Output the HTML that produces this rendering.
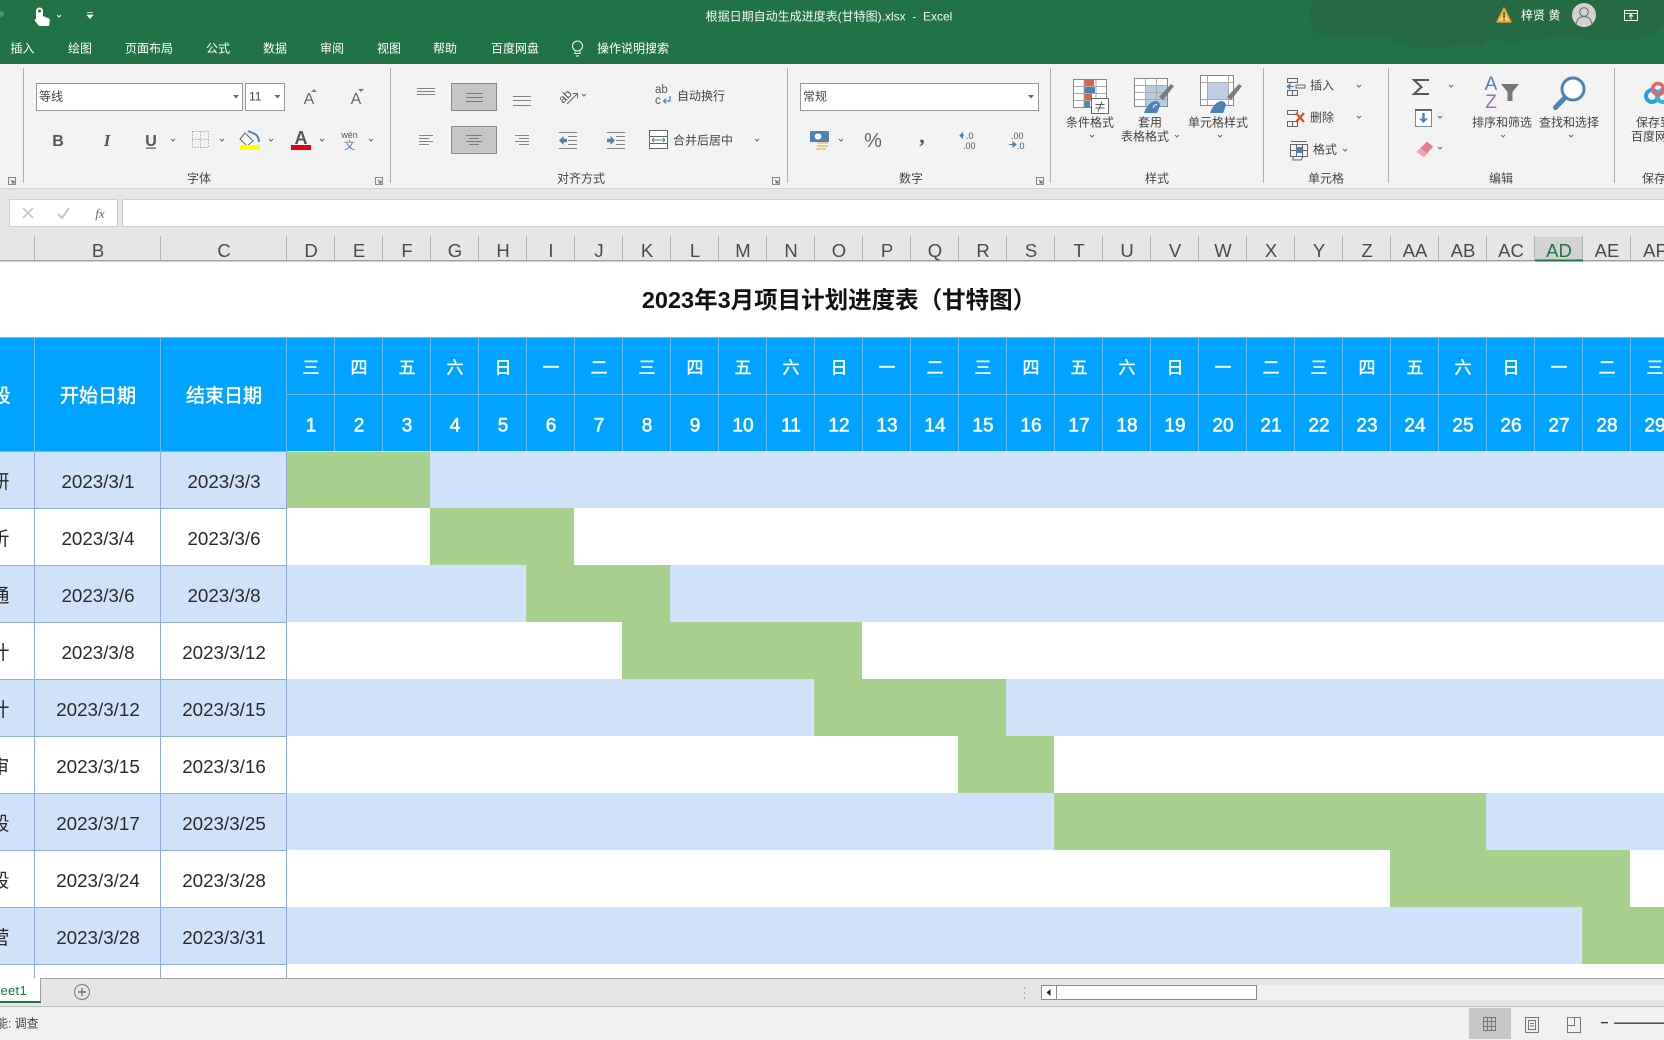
<!DOCTYPE html>
<html lang="zh">
<head>
<meta charset="utf-8">
<title>根据日期自动生成进度表(甘特图).xlsx - Excel</title>
<style>
html,body{margin:0;padding:0;width:1664px;height:1040px;overflow:hidden;background:#fff}
svg{display:block;position:absolute;left:0;top:0}
text{font-family:"Liberation Sans","Noto Sans CJK SC",sans-serif}
.u{font-size:12px;fill:#444}
.w{font-size:12px;fill:#fff}
.m{text-anchor:middle}
.h{font-size:18.5px;fill:#4a4a4a;text-anchor:middle}
.d{font-size:18.8px;fill:#2a2a2a;text-anchor:middle}
.n{font-size:19px;fill:#fff;stroke:#fff;stroke-width:.6px;text-anchor:middle}
.s{font-size:17px;fill:#fff;stroke:#fff;stroke-width:.4px;text-anchor:middle}
.g{font-size:19px;fill:#fff;stroke:#fff;stroke-width:.5px;text-anchor:middle}
.l{stroke:#666;stroke-width:1;fill:none}
</style>
</head>
<body>
<svg width="1664" height="1040" viewBox="0 0 1664 1040" xmlns="http://www.w3.org/2000/svg">
<!-- Title bar -->
<rect x="0" y="0" width="1664" height="64" fill="#217346"/>
<path d="M1312 0C1308 14 1310 30 1320 37L1392 37C1396 44 1404 48 1420 47L1484 46L1490 38L1510 43C1540 36 1590 38 1612 40C1640 42 1656 36 1664 26L1664 0Z" fill="#2a5f42" opacity=".36"/>
<circle cx="1" cy="14" r="3" fill="#4f9170"/>
<path d="M36 19V11a3.500 3.500 0 1 1 7 0V16l5 2c1.500 .6 2 1.600 1.800 3L49 26H39l-4-5c-.8-1 .2-2.500 1-2Z" fill="#fff"/>
<circle cx="39.500" cy="11" r="1.500" fill="#217346"/>
<path d="M57 15l2 2 2-2" fill="none" stroke="#fff"/>
<path d="M87 12.500h6M87 15h6l-3 3.500Z" fill="#fff" stroke="#fff" stroke-width=".7"/>
<text class="w m" x="829" y="20.500" fill-opacity=".95">根据日期自动生成进度表(甘特图).xlsx&#160;&#160;-&#160;&#160;Excel</text>
<polygon points="1504,8 1511,22 1497,22" fill="#f9cc6a" stroke="#e89a32" stroke-width="1.500" stroke-linejoin="round"/>
<rect x="1503.300" y="12" width="1.500" height="6" fill="#5a4a20"/><rect x="1503.300" y="19" width="1.500" height="1.500" fill="#5a4a20"/>
<text class="w" x="1521" y="19.500">梓贤 黄</text>
<circle cx="1584" cy="15" r="12" fill="#d2d2d2"/>
<circle cx="1584" cy="12" r="4.300" fill="none" stroke="#666"/>
<path d="M1576 24c1-5 4-7.500 8-7.500s7 2.500 8 7.500" fill="none" stroke="#666"/>
<rect x="1624.500" y="10.500" width="13" height="10" fill="none" stroke="#fff"/>
<path d="M1625 13.500h12M1631 19.500v-5M1629 16.500l2-2 2 2" fill="none" stroke="#fff"/>
<!-- Menu tabs -->
<text class="w" x="10.500" y="52.500">插入</text>
<text class="w" x="68" y="52.500">绘图</text>
<text class="w" x="125" y="52.500">页面布局</text>
<text class="w" x="206" y="52.500">公式</text>
<text class="w" x="263" y="52.500">数据</text>
<text class="w" x="320" y="52.500">审阅</text>
<text class="w" x="377" y="52.500">视图</text>
<text class="w" x="433" y="52.500">帮助</text>
<text class="w" x="491" y="52.500">百度网盘</text>
<text class="w" x="597" y="52.500">操作说明搜索</text>
<circle cx="577.500" cy="46" r="5" fill="none" stroke="#fff"/>
<path d="M575 51.500v2h5v-2M576 56h3" fill="none" stroke="#fff"/>
<!-- Ribbon -->
<rect x="0" y="64" width="1664" height="124" fill="#f3f3f3"/>
<rect x="0" y="188" width="1664" height="39" fill="#e6e6e6"/>
<rect x="0" y="188" width="1664" height="1" fill="#d4d4d4"/>
<path d="M23.500 68V183M390.500 68V183M787.500 68V183M1050.500 68V183M1263.500 68V183M1388.500 68V183M1614.500 68V183" stroke="#b0b0b0" fill="none"/>
<!-- launchers -->
<path d="M8.500 177.500h7v7h-7zM375.500 177.500h7v7h-7zM772.500 177.500h7v7h-7zM1036.500 177.500h7v7h-7z" fill="none" stroke="#888"/>
<path d="M11 180l3 3M14 180.500V183h-2.500M378 180l3 3M381 180.500V183h-2.500M775 180l3 3M778 180.500V183h-2.500M1039 180l3 3M1042 180.500V183h-2.500" fill="none" stroke="#666"/>
<!-- group labels -->
<text class="u m" x="199" y="182.500">字体</text>
<text class="u m" x="581" y="182.500">对齐方式</text>
<text class="u m" x="911" y="182.500">数字</text>
<text class="u m" x="1157" y="182.500">样式</text>
<text class="u m" x="1326" y="182.500">单元格</text>
<text class="u m" x="1501" y="182.500">编辑</text>
<text class="u" x="1642" y="182.500">保存</text>
<!-- combo boxes -->
<rect x="36.500" y="83.500" width="206" height="27" fill="#fff" stroke="#999"/>
<rect x="245.500" y="83.500" width="39" height="27" fill="#fff" stroke="#999"/>
<rect x="800.500" y="83.500" width="238" height="27" fill="#fff" stroke="#999"/>
<text class="u" x="39" y="100.500">等线</text>
<text class="u" x="249" y="100.500">11</text>
<text class="u" x="803" y="100.500">常规</text>
<path d="M233 95h6l-3 3.500ZM274.500 95h6l-3 3.500ZM1028 95h6l-3 3.500Z" fill="#666"/>
<!-- grow/shrink -->
<text x="309" y="104" class="m" font-size="16" fill="#666">A</text>
<text x="356" y="104" class="m" font-size="16" fill="#666">A</text>
<path d="M311 92l3-3 3 3Z" fill="#4e81b5"/>
<path d="M358 89h6l-3 3Z" fill="#4e81b5"/>
<!-- B I U -->
<text x="58" y="146" class="m" font-size="16" font-weight="700" fill="#555">B</text>
<text x="107" y="146" class="m" font-size="17" font-weight="700" font-style="italic" fill="#555" style="font-family:'Liberation Serif',serif">I</text>
<text x="151" y="146" class="m" font-size="16" font-weight="700" fill="#555">U</text>
<rect x="146" y="147.500" width="10" height="1.200" fill="#555"/>
<!-- border icon -->
<path d="M192.500 131.500h16v16h-16zM200.500 131.500v16M192.500 139.500h16" fill="none" stroke="#888" stroke-dasharray="1 2"/>
<!-- fill color -->
<path d="M245 133l8 8-6 5-7-7Z" fill="#fff" stroke="#666"/>
<path d="M248 131l7 3c2 1 4 4 4 8" fill="none" stroke="#4e81b5" stroke-width="2"/>
<rect x="240" y="145" width="20" height="5" fill="#ffff00"/>
<!-- font color -->
<text x="301" y="144" class="m" font-size="18" font-weight="700" fill="#555">A</text>
<rect x="291" y="145" width="20" height="5" fill="#e60012"/>
<!-- wen -->
<text x="349.500" y="138" class="m" font-size="9" fill="#555">wén</text>
<text x="349.500" y="149" class="m" font-size="11" fill="#4e81b5">文</text>
<!-- align icons -->
<rect x="451.500" y="83.500" width="45" height="27" fill="#c6c6c6" stroke="#8a8a8a"/>
<rect x="451.500" y="126.500" width="45" height="27" fill="#c6c6c6" stroke="#8a8a8a"/>
<path class="l" stroke-opacity=".8" d="M417 88.500h18M417 91.500h18M417 94.500h18M466 93.500h17M466 97.500h17M466 101.500h17M513 96.500h18M513 100.500h18M513 105.500h18M419 135.500h14M419 138.500h10M419 141.500h14M419 144.500h10M466 135.500h16M469 138.500h10M466 141.500h16M469 144.500h10M515 135.500h14M519 138.500h10M515 141.500h14M519 144.500h10"/>
<!-- orientation -->
<text x="0" y="0" font-size="12" fill="#555" transform="translate(563 104) rotate(-45)">ab</text>
<path d="M567 104l10-10M572.500 93.500h5v5" fill="none" stroke="#666"/>
<!-- wrap -->
<text x="655" y="93" font-size="11.500" fill="#555">ab</text>
<text x="655" y="104" font-size="11.500" fill="#555">c</text>
<path d="M670 96v5h-6M666 98.500l-2.500 2.500 2.500 2.500" fill="none" stroke="#4e81b5" stroke-width="1.200"/>
<text class="u" x="677" y="100">自动换行</text>
<!-- indent -->
<path class="l" stroke-opacity=".8" d="M559 132.500h18M568 136.500h9M568 140.500h9M568 144.500h9M559 148.500h18M607 132.500h18M616 136.500h9M616 140.500h9M616 144.500h9M607 148.500h18"/>
<path d="M559 140.500l4.500-4.500v2.800h3.500v3.400h-3.500v2.800ZM615 140.500l-4.500-4.500v2.800h-3.500v3.400h3.500v2.800Z" fill="#4e81b5"/>
<!-- merge -->
<rect x="649.500" y="130.500" width="18" height="18" fill="#fff" stroke="#666"/>
<path d="M650 136.500h17M650 143.500h17" stroke="#666"/>
<path d="M652 140h13M654 138l-2 2 2 2M663 138l2 2-2 2" fill="none" stroke="#4e81b5"/>
<text class="u" x="673" y="144.500">合并后居中</text>
<!-- number icons -->
<rect x="810" y="131" width="19" height="11" rx="1" fill="#4e81b5"/>
<ellipse cx="818" cy="136.500" rx="3.500" ry="3" fill="#fff"/>
<path d="M817 142h11v2h-11zM817 145h11v2h-11zM816 148h10v2h-10z" fill="#f2c98d"/>
<text x="873" y="147" class="m" font-size="20" fill="#666">%</text>
<text x="922" y="143" class="m" font-size="22" font-weight="700" fill="#555" style="font-family:'Liberation Serif',serif">,</text>
<path d="M960 135.500h4M960 135.500l2.500-2.500v5ZM1009 144.500h4M1016 144.500l-3-2.500v5Z" fill="#4e81b5" stroke="#4e81b5"/>
<text x="966" y="139" font-size="9" fill="#555">.0</text>
<text x="963" y="149" font-size="9" fill="#555">.00</text>
<text x="1011" y="139" font-size="9" fill="#555">.00</text>
<text x="1017" y="149" font-size="9" fill="#555">.0</text>
<!-- Conditional format -->
<rect x="1073.500" y="79.500" width="33" height="28" fill="#fff" stroke="#888"/>
<path d="M1084 79.500h10v7h-10z" fill="#d9644a"/>
<path d="M1084 86.500h11v7h-11z" fill="#4e81b5"/>
<path d="M1084 93.500h8v7h-8z" fill="#d9644a"/>
<path d="M1084 100.500h6v7h-6z" fill="#4e81b5"/>
<path d="M1084 80v27M1096 80v27M1074 86.500h32M1074 93.500h32M1074 100.500h32" stroke="#aaa" fill="none"/>
<rect x="1091.500" y="98.500" width="17" height="15" fill="#fff" stroke="#666"/>
<path d="M1095.500 104.500h9M1095.500 108h9M1102 101.500l-4 10" stroke="#555" fill="none"/>
<text class="u m" x="1090" y="126.500">条件格式</text>
<!-- Table format -->
<rect x="1134.500" y="78.500" width="33" height="28" fill="#fff" stroke="#888"/>
<rect x="1146" y="85" width="21" height="21" fill="#b9cbe4"/>
<path d="M1145.500 79v27M1156.500 79v27M1135 85.500h32M1135 92.500h32M1135 99.500h32" stroke="#aaa" fill="none"/>
<path d="M1171 84l3 2-11 14-4-3Z" fill="#7a7a7a"/>
<path d="M1144 113c2-6 6-11 11-12 3 0 5 2 5 4-1 3-2 6-3 8Z" fill="#4e81b5"/>
<path d="M1153 108c1-3 3-4 4-3" stroke="#fff" fill="none"/>
<text class="u m" x="1150" y="126.500">套用</text>
<text class="u" x="1121" y="140.500">表格格式</text>
<!-- Cell style -->
<rect x="1200.500" y="75.500" width="33" height="30" fill="#fff" stroke="#888"/>
<rect x="1207" y="82" width="21" height="18" fill="#bccde5"/>
<path d="M1207.500 76v29M1228.500 76v29M1201 82.500h32M1201 99.500h32" stroke="#aaa" fill="none"/>
<path d="M1239 84l3 2-11 14-4-3Z" fill="#7a7a7a"/>
<path d="M1210 113c2-6 6-11 11-12 3 0 5 2 5 4-1 3-2 6-3 8Z" fill="#4e81b5"/>
<text class="u m" x="1218" y="126.500">单元格样式</text>
<!-- Insert -->
<path class="l" d="M1287.500 78.500h10v4h-10zM1287.500 90.500h10v5h-10zM1292.500 90.500v5M1296 85h9v3h-9z"/>
<path d="M1287 86.500h7M1287 86.500l3-2.500v5Z" fill="#4e81b5" stroke="#4e81b5"/>
<text class="u" x="1310" y="89.500">插入</text>
<!-- Delete -->
<path class="l" d="M1287.500 110.500h10v4h-10zM1287.500 121.500h10v5h-10zM1292.500 121.500v5"/>
<path d="M1296 113l8 9M1304 113l-8 9" stroke="#d9502e" stroke-width="2.200" fill="none"/>
<text class="u" x="1310" y="121.500">删除</text>
<!-- Format -->
<path class="l" d="M1290.500 144.500h17v12h-17zM1296.500 144.500v12M1302.500 144.500v12M1290.500 150.500h17M1291 141.500h16M1293 156.500v3.500h8l2-3.500"/>
<rect x="1296" y="147" width="6" height="6" fill="#4e81b5"/>
<text class="u" x="1313" y="153.500">格式</text>
<!-- Sigma -->
<path d="M1429 80H1414L1421.500 87L1414 94H1429" fill="none" stroke="#555" stroke-width="2"/>
<!-- Fill down -->
<rect x="1415.500" y="109.500" width="16" height="17" fill="#fff" stroke="#888"/>
<rect x="1415" y="109" width="17" height="2" fill="#666"/>
<path d="M1423.500 113v7" stroke="#4e81b5" stroke-width="2.400"/>
<path d="M1419 118.500h9l-4.500 4.500Z" fill="#4e81b5"/>
<!-- Eraser -->
<path d="M1427 141.500l6 5-9 10.500-7.500-5Z" fill="#e8798f"/>
<path d="M1416.500 152l4-4 6 5-3 4Z" fill="#f1a6b5"/>
<!-- Sort -->
<text x="1491" y="90" class="m" font-size="19" fill="#4e81b5">A</text>
<text x="1491" y="108" class="m" font-size="19" fill="#9a72b8">Z</text>
<polygon points="1501,84 1519,84 1512.500,92 1512.500,101 1507.500,101 1507.500,92" fill="#777"/>
<text class="u m" x="1502" y="126.500">排序和筛选</text>
<!-- Find -->
<circle cx="1573" cy="89" r="11" fill="#fff" stroke="#4e81b5" stroke-width="3"/>
<path d="M1564.500 98l-9 9.500" stroke="#4e81b5" stroke-width="5" stroke-linecap="round"/>
<text class="u m" x="1569" y="126.500">查找和选择</text>
<!-- Baidu -->
<circle cx="1652" cy="96" r="6" fill="none" stroke="#2f9be0" stroke-width="4"/>
<circle cx="1663" cy="96" r="6" fill="none" stroke="#2fb5e0" stroke-width="4"/>
<circle cx="1658" cy="89" r="5.500" fill="none" stroke="#e8616b" stroke-width="3.500"/>
<text class="u" x="1636" y="126.500">保存到</text>
<text class="u" x="1631" y="140.500">百度网盘</text>
<!-- Chevrons -->
<path fill="none" stroke="#666" d="M171 139l2 2 2-2M220 139l2 2 2-2M269 139l2 2 2-2M320 139l2 2 2-2M369 139l2 2 2-2M582 94l2 2 2-2M755 139l2 2 2-2M839 139l2 2 2-2M1090 135l2 2 2-2M1175 135l2 2 2-2M1218 135l2 2 2-2M1357 85l2 2 2-2M1357 116l2 2 2-2M1343 149l2 2 2-2M1449 85l2 2 2-2M1438 116l2 2 2-2M1438 147l2 2 2-2M1501 135l2 2 2-2M1569 135l2 2 2-2"/>
<!-- Formula bar -->
<rect x="9.500" y="199.500" width="108" height="27" fill="#fff" stroke="#d0d0d0"/>
<rect x="122.500" y="199.500" width="1543" height="27" fill="#fff" stroke="#d0d0d0"/>
<path d="M23 208l10 10M33 208l-10 10" stroke="#c8c8c8" stroke-width="1.800" fill="none"/>
<path d="M58 214l4 4 7-10" stroke="#c8c8c8" stroke-width="2.200" fill="none"/>
<text x="100" y="218" class="m" font-size="13" font-style="italic" fill="#666" style="font-family:'Liberation Serif',serif">fx</text>
<!-- Column headers -->
<rect x="0" y="227" width="1664" height="34" fill="#e6e6e6"/>
<rect x="1535" y="237" width="48" height="24" fill="#d2d2d2"/>
<path stroke="#b4b4b4" fill="none" d="M34.500 236V260M160.500 236V260M286.500 236V260M334.500 236V260M382.500 236V260M430.500 236V260M478.500 236V260M526.500 236V260M574.500 236V260M622.500 236V260M670.500 236V260M718.500 236V260M766.500 236V260M814.500 236V260M862.500 236V260M910.500 236V260M958.500 236V260M1006.500 236V260M1054.500 236V260M1102.500 236V260M1150.500 236V260M1198.500 236V260M1246.500 236V260M1294.500 236V260M1342.500 236V260M1390.500 236V260M1438.500 236V260M1486.500 236V260M1534.500 236V260M1582.500 236V260M1630.500 236V260"/>
<rect x="0" y="260" width="1664" height="1.500" fill="#a0a0a0"/>
<rect x="1535" y="259.500" width="48" height="2" fill="#217346"/>
<g>
<text class="h" x="98" y="257">B</text><text class="h" x="224" y="257">C</text>
<text class="h" x="311" y="257">D</text><text class="h" x="359" y="257">E</text><text class="h" x="407" y="257">F</text><text class="h" x="455" y="257">G</text><text class="h" x="503" y="257">H</text><text class="h" x="551" y="257">I</text><text class="h" x="599" y="257">J</text><text class="h" x="647" y="257">K</text><text class="h" x="695" y="257">L</text><text class="h" x="743" y="257">M</text><text class="h" x="791" y="257">N</text><text class="h" x="839" y="257">O</text><text class="h" x="887" y="257">P</text><text class="h" x="935" y="257">Q</text><text class="h" x="983" y="257">R</text><text class="h" x="1031" y="257">S</text><text class="h" x="1079" y="257">T</text><text class="h" x="1127" y="257">U</text><text class="h" x="1175" y="257">V</text><text class="h" x="1223" y="257">W</text><text class="h" x="1271" y="257">X</text><text class="h" x="1319" y="257">Y</text><text class="h" x="1367" y="257">Z</text><text class="h" x="1415" y="257">AA</text><text class="h" x="1463" y="257">AB</text><text class="h" x="1511" y="257">AC</text><text class="h" x="1559" y="257" style="fill:#217346">AD</text><text class="h" x="1607" y="257">AE</text><text class="h" x="1655" y="257">AF</text>
</g>
<!-- Sheet -->
<rect x="0" y="262" width="1664" height="716" fill="#fff"/>
<text x="839" y="308" class="m" font-size="23.500" font-weight="700" fill="#111">2023年3月项目计划进度表（甘特图）</text>
<!-- Header -->
<rect x="0" y="337" width="1664" height="114" fill="#00a3ff"/>
<path stroke="#6cbdf0" fill="none" d="M0 337.500H1664M34.500 337V451M160.500 337V451M286.500 337V451M334.500 337V451M382.500 337V451M430.500 337V451M478.500 337V451M526.500 337V451M574.500 337V451M622.500 337V451M670.500 337V451M718.500 337V451M766.500 337V451M814.500 337V451M862.500 337V451M910.500 337V451M958.500 337V451M1006.500 337V451M1054.500 337V451M1102.500 337V451M1150.500 337V451M1198.500 337V451M1246.500 337V451M1294.500 337V451M1342.500 337V451M1390.500 337V451M1438.500 337V451M1486.500 337V451M1534.500 337V451M1582.500 337V451M1630.500 337V451M287 394.500H1664"/>
<text class="g" x="98" y="402">开始日期</text>
<text class="g" x="224" y="402">结束日期</text>
<text class="g" x="1" y="402">段</text>
<text class="s" x="311 359 407 455 503 551 599 647 695 743 791 839 887 935 983 1031 1079 1127 1175 1223 1271 1319 1367 1415 1463 1511 1559 1607 1655" y="373.500">三四五六日一二三四五六日一二三四五六日一二三四五六日一二三</text>
<text class="n" x="311 359 407 455 503 551 599 647 695" y="431.500">123456789</text>
<text class="n" x="743" y="431.500">10</text><text class="n" x="791" y="431.500">11</text><text class="n" x="839" y="431.500">12</text><text class="n" x="887" y="431.500">13</text><text class="n" x="935" y="431.500">14</text><text class="n" x="983" y="431.500">15</text><text class="n" x="1031" y="431.500">16</text><text class="n" x="1079" y="431.500">17</text><text class="n" x="1127" y="431.500">18</text><text class="n" x="1175" y="431.500">19</text><text class="n" x="1223" y="431.500">20</text><text class="n" x="1271" y="431.500">21</text><text class="n" x="1319" y="431.500">22</text><text class="n" x="1367" y="431.500">23</text><text class="n" x="1415" y="431.500">24</text><text class="n" x="1463" y="431.500">25</text><text class="n" x="1511" y="431.500">26</text><text class="n" x="1559" y="431.500">27</text><text class="n" x="1607" y="431.500">28</text><text class="n" x="1655" y="431.500">29</text>
<!-- Bands -->
<rect x="0" y="451" width="1664" height="57" fill="#d0e1fa"/>
<rect x="0" y="565" width="1664" height="57" fill="#d0e1fa"/>
<rect x="0" y="679" width="1664" height="57" fill="#d0e1fa"/>
<rect x="0" y="793" width="1664" height="57" fill="#d0e1fa"/>
<rect x="0" y="907" width="1664" height="57" fill="#d0e1fa"/>
<!-- Gantt -->
<g fill="#a9d18e">
<rect x="287" y="452" width="143" height="56"/>
<rect x="430" y="508" width="144" height="57"/>
<rect x="526" y="565" width="144" height="57"/>
<rect x="622" y="622" width="240" height="57"/>
<rect x="814" y="679" width="192" height="57"/>
<rect x="958" y="736" width="96" height="57"/>
<rect x="1054" y="793" width="432" height="57"/>
<rect x="1390" y="850" width="240" height="57"/>
<rect x="1582" y="907" width="82" height="57"/>
</g>
<!-- Table borders -->
<path stroke="#8fabdc" fill="none" d="M34.500 451V978M160.500 451V978M286.500 451V978M0 451.500H287M0 508.500H287M0 565.500H287M0 622.500H287M0 679.500H287M0 736.500H287M0 793.500H287M0 850.500H287M0 907.500H287M0 964.500H287"/>
<!-- Row text -->
<g>
<text class="d" x="98" y="488">2023/3/1</text><text class="d" x="224" y="488">2023/3/3</text>
<text class="d" x="98" y="545">2023/3/4</text><text class="d" x="224" y="545">2023/3/6</text>
<text class="d" x="98" y="602">2023/3/6</text><text class="d" x="224" y="602">2023/3/8</text>
<text class="d" x="98" y="659">2023/3/8</text><text class="d" x="224" y="659">2023/3/12</text>
<text class="d" x="98" y="716">2023/3/12</text><text class="d" x="224" y="716">2023/3/15</text>
<text class="d" x="98" y="773">2023/3/15</text><text class="d" x="224" y="773">2023/3/16</text>
<text class="d" x="98" y="830">2023/3/17</text><text class="d" x="224" y="830">2023/3/25</text>
<text class="d" x="98" y="887">2023/3/24</text><text class="d" x="224" y="887">2023/3/28</text>
<text class="d" x="98" y="944">2023/3/28</text><text class="d" x="224" y="944">2023/3/31</text>
<text class="d" x="0" y="488">研</text>
<text class="d" x="0" y="545">析</text>
<text class="d" x="0" y="602">通</text>
<text class="d" x="0" y="659">计</text>
<text class="d" x="0" y="716">计</text>
<text class="d" x="0" y="773">审</text>
<text class="d" x="0" y="830">段</text>
<text class="d" x="0" y="887">段</text>
<text class="d" x="0" y="944">营</text>
</g>
<!-- Sheet tabs + scrollbar -->
<rect x="0" y="978" width="1664" height="29" fill="#e6e6e6"/>
<rect x="0" y="978" width="1664" height="1" fill="#a0a0a0"/>
<rect x="0" y="978" width="40.500" height="24" fill="#fff"/>
<path d="M40.500 978V1002" stroke="#a0a0a0"/>
<rect x="0" y="1001" width="41" height="2" fill="#217346"/>
<text x="-16" y="995" font-size="13" letter-spacing=".3" fill="#217346">Sheet1</text>
<circle cx="82" cy="992" r="7.500" fill="none" stroke="#888" stroke-width="1.200"/>
<path d="M82 988v8M78 992h8" stroke="#777" stroke-width="1.400"/>
<path d="M1024.500 987v2M1024.500 992v2M1024.500 997v2" stroke="#aaa"/>
<rect x="1057" y="985" width="607" height="15" fill="#f1f1f1"/>
<rect x="1041.500" y="985.500" width="15" height="14" fill="#fff" stroke="#8a8a8a"/>
<path d="M1050.500 989v7l-4-3.500Z" fill="#222"/>
<rect x="1056.500" y="985.500" width="200" height="14" fill="#fff" stroke="#8a8a8a"/>
<rect x="0" y="1006" width="1664" height="1" fill="#bdbdbd"/>
<!-- Status bar -->
<rect x="0" y="1007" width="1664" height="33" fill="#f1f1f1"/>
<text x="-16" y="1027.500" font-size="12" fill="#444">功能: 调查</text>
<rect x="1469" y="1008" width="42" height="31" fill="#c6c6c6"/>
<path d="M1483.500 1017.500h12v13h-12zM1487.500 1017.500v13M1491.500 1017.500v13M1483.500 1021.500h12M1483.500 1026.500h12" fill="none" stroke="#777"/>
<path d="M1525.500 1017.500h13v15h-13zM1528.500 1020.500h7v9h-7zM1530 1023.500h4M1530 1026h4" fill="none" stroke="#777"/>
<path d="M1567.500 1017.500h13v15h-13zM1567.500 1025.500h7V1018M1574.500 1018v7.500" fill="none" stroke="#777"/>
<rect x="1601" y="1022" width="7" height="1.300" fill="#333"/>
<rect x="1614" y="1022.500" width="50" height="1.300" fill="#333"/>
</svg>
</body>
</html>
